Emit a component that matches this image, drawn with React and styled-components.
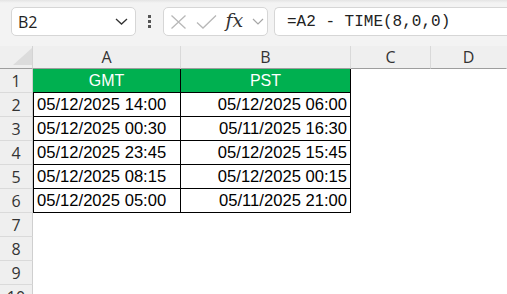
import React from "react"
import styled, { createGlobalStyle } from "styled-components"

const GlobalStyle = createGlobalStyle`
  * { box-sizing: border-box; }
  html, body { margin: 0; padding: 0; background: #ffffff; }
  body { font-family: "Liberation Sans", Arial, sans-serif; overflow: hidden; }
`

const rows = [
  ["05/12/2025 14:00", "05/12/2025 06:00"],
  ["05/12/2025 00:30", "05/11/2025 16:30"],
  ["05/12/2025 23:45", "05/12/2025 15:45"],
  ["05/12/2025 08:15", "05/12/2025 00:15"],
  ["05/12/2025 05:00", "05/11/2025 21:00"],
]

export default function App() {
  return (
    <Wrapper>
      <GlobalStyle />
      <Toolbar>
        <NameBox>
          <span>B2</span>
          <svg width="13" height="7" viewBox="0 0 13 7">
            <path d="M1 1 L6.5 6 L12 1" fill="none" stroke="#333" strokeWidth="1.3" />
          </svg>
        </NameBox>
        <Dots>
          <i />
          <i />
          <i />
        </Dots>
        <FormulaButtons>
          <svg width="17" height="14" viewBox="0 0 17 14">
            <path d="M1.5 0.5 L15.5 13.5 M15.5 0.5 L1.5 13.5" stroke="#b8b8b8" strokeWidth="1.3" />
          </svg>
          <svg width="21" height="14" viewBox="0 0 21 14">
            <path d="M1 7.5 L7 13 L20 0.5" fill="none" stroke="#b8b8b8" strokeWidth="1.3" />
          </svg>
          <Fx>fx</Fx>
          <svg width="12" height="7" viewBox="0 0 12 7">
            <path d="M1 1 L6 6 L11 1" fill="none" stroke="#a6a6a6" strokeWidth="1.2" />
          </svg>
        </FormulaButtons>
        <FormulaBar>=A2 - TIME(8,0,0)</FormulaBar>
      </Toolbar>

      <Sheet>
        <Corner>
          <svg width="19" height="17" viewBox="0 0 19 17">
            <path d="M19 0 L19 17 L0 17 Z" fill="#dcdcdc" />
          </svg>
        </Corner>
        <ColHead>A</ColHead>
        <ColHead>B</ColHead>
        <ColHead>C</ColHead>
        <ColHead $last>D</ColHead>

        <RowHead>1</RowHead>
        <Cell $header $boxed $first>GMT</Cell>
        <Cell $header $boxed>PST</Cell>
        <Cell />
        <Cell />

        {rows.map(([gmt, pst], i) => (
          <React.Fragment key={i}>
            <RowHead>{i + 2}</RowHead>
            <Cell $boxed $first>{gmt}</Cell>
            <Cell $boxed $right>{pst}</Cell>
            <Cell />
            <Cell />
          </React.Fragment>
        ))}

        {[7, 8, 9, 10].map((n) => (
          <React.Fragment key={n}>
            <RowHead>{n}</RowHead>
            <Cell />
            <Cell />
            <Cell />
            <Cell />
          </React.Fragment>
        ))}
      </Sheet>
    </Wrapper>
  )
}

const Wrapper = styled.div`
  width: 507px;
  height: 294px;
  overflow: hidden;
  background: #ffffff;
`
const Toolbar = styled.div`
  height: 46px;
  display: flex;
  align-items: flex-start;
  padding: 7px 0 0 11px;
  background: linear-gradient(#e4e4e4 0px, #f3f3f3 3px);
`
const Box = styled.div`
  height: 29px;
  background: #ffffff;
  border: 1px solid #d6d6d6;
  border-radius: 5px;
  display: flex;
  align-items: center;
`
const NameBox = styled(Box)`
  width: 125px;
  padding: 0 7px 0 6px;
  justify-content: space-between;
  font-family: "Open Sans", "Liberation Sans", sans-serif;
  font-size: 16px;
  color: #222;
`
const Dots = styled.div`
  width: 27px;
  height: 29px;
  display: flex;
  flex-direction: column;
  align-items: center;
  justify-content: center;
  gap: 2px;
  i {
    width: 3px;
    height: 3px;
    background: #555;
  }
`
const FormulaButtons = styled(Box)`
  width: 105px;
  padding: 0 3px 0 6px;
  justify-content: space-between;
`
const Fx = styled.span`
  font-family: "DejaVu Serif", "Liberation Serif", serif;
  font-style: italic;
  font-size: 19px;
  color: #333;
  line-height: 1;
  margin-top: -2px;
`
const FormulaBar = styled(Box)`
  flex: 1;
  margin-left: 6px;
  border-right: none;
  border-radius: 5px 0 0 5px;
  padding-left: 12px;
  font-family: "Liberation Mono", "DejaVu Sans Mono", monospace;
  font-size: 16px;
  color: #222;
`
const Sheet = styled.div`
  display: grid;
  grid-template-columns: 33px 148px 170px 80px 1fr;
  grid-template-rows: 23px;
  grid-auto-rows: 24px;
`
const HeadBase = styled.div`
  background: #efefef;
  display: flex;
  align-items: center;
  justify-content: center;
  font-family: "Open Sans", "Liberation Sans", sans-serif;
  font-size: 16px;
  color: #333;
`
const Corner = styled(HeadBase)`
  justify-content: flex-end;
  align-items: flex-end;
  padding: 0 0 3px 0;
  border-right: 1px solid #d4d4d4;
  border-bottom: 1px solid #9e9e9e;
`
const ColHead = styled(HeadBase)`
  border-bottom: 1px solid #9e9e9e;
  border-right: 1px solid ${(p) => (p.$last ? "transparent" : "#d9d9d9")};
`
const RowHead = styled(HeadBase)`
  border-right: 1px solid #cfcfcf;
  border-bottom: 1px solid #dadada;
`
const Cell = styled.div`
  display: flex;
  align-items: center;
  padding: 0 3px;
  white-space: nowrap;
  font-family: "Liberation Sans", Arial, sans-serif;
  font-size: 16.6px;
  color: #000;
  justify-content: ${(p) => (p.$header ? "center" : p.$right ? "flex-end" : "flex-start")};
  background: ${(p) => (p.$header ? "#00b050" : "#ffffff")};
  ${(p) => p.$header && "color: #ffffff; font-size: 16px;"}
  ${(p) => p.$boxed && "border-right: 1px solid #000; border-bottom: 1px solid #000;"}
  ${(p) => p.$boxed && !p.$header && p.$first && "border-left: 1px solid #000; padding-left: 3px;"}
`
